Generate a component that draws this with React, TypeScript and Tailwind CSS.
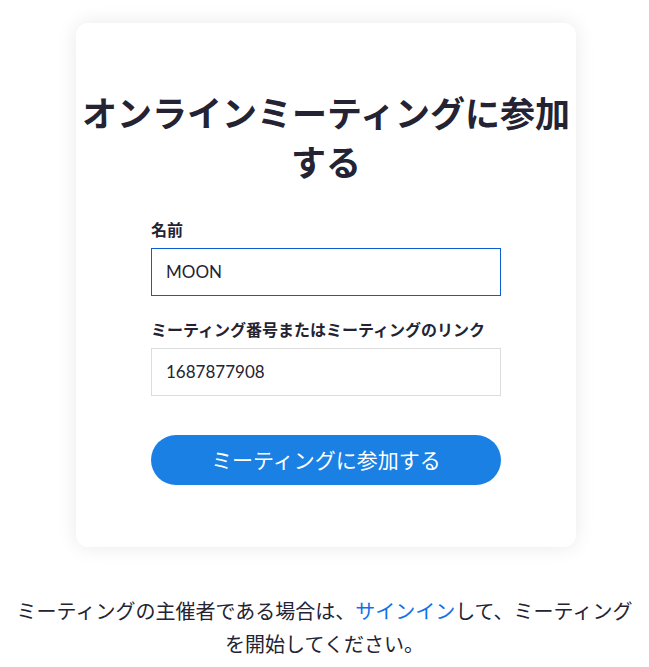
import React from 'react';

const FONT = "font-['Lato','Noto_Sans_CJK_JP',sans-serif]";

function Field({ label, value, active }: { label: string; value: string; active?: boolean }) {
    return (
        <div className="flex flex-col">
            <label className="text-[16px] leading-[20px] font-bold text-[#232333]">{label}</label>
            <div
                className={
                    active
                        ? 'mt-2 flex h-[48px] items-center border border-[#0b5cd5] px-[14px] text-[17px] text-[#232333]'
                        : 'mt-2 flex h-[48px] items-center border border-[#dcdcdc] px-[14px] text-[17px] text-[#232333]'
                }
            >
                {value}
            </div>
        </div>
    );
}

function App() {
    return (
        <div className={`${FONT} flex min-h-screen flex-col items-center bg-white pt-[23px]`}>
            <div className="ml-[3px] flex w-[500px] flex-col items-center rounded-[12px] bg-white pt-[66px] pb-[62px] shadow-[0_0_20px_rgba(0,0,0,0.09)]">
                <h1 className="text-center text-[35px] leading-[49px] font-bold text-[#232333]">
                    オンラインミーティングに参加する
                </h1>
                <form className="mt-[33px] flex w-[350px] flex-col">
                    <Field label="名前" value="MOON" active />
                    <div className="mt-[24px]">
                        <Field label="ミーティング番号またはミーティングのリンク" value="1687877908" />
                    </div>
                    <button
                        type="button"
                        className="mt-[39px] h-[50px] rounded-full bg-[#1a80e3] text-[21px] text-white"
                    >
                        ミーティングに参加する
                    </button>
                </form>
            </div>
            <p className="mt-[48px] px-4 text-center text-[20px] leading-[33px] text-[#232333]">
                ミーティングの主催者である場合は、<span className="text-[#0e71eb]">サインイン</span>して、ミーティングを開始してください。
            </p>
        </div>
    );
}

export default App;
